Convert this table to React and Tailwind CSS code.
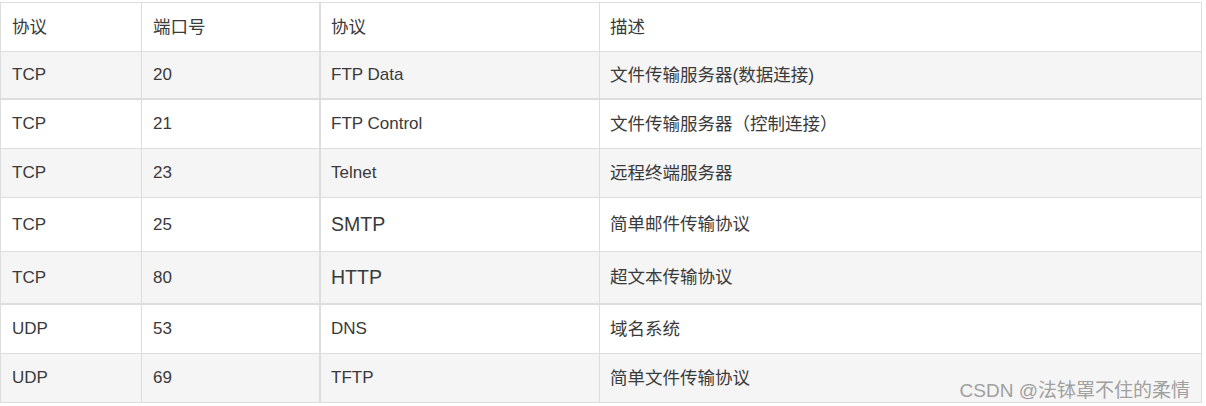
import React from "react";

const rows = [
  { proto: "TCP", port: "20", name: "FTP Data", desc: "文件传输服务器(数据连接)", h: "h-[48px] border-b-2", bg: "bg-[#f5f5f5]" },
  { proto: "TCP", port: "21", name: "FTP Control", desc: "文件传输服务器（控制连接）", h: "h-[49px] border-b", bg: "bg-white" },
  { proto: "TCP", port: "23", name: "Telnet", desc: "远程终端服务器", h: "h-[49px] border-b", bg: "bg-[#f5f5f5]" },
  { proto: "TCP", port: "25", name: "SMTP", desc: "简单邮件传输协议", h: "h-[54px] border-b", bg: "bg-white", big: true },
  { proto: "TCP", port: "80", name: "HTTP", desc: "超文本传输协议", h: "h-[53px] border-b-2", bg: "bg-[#f5f5f5]", big: true },
  { proto: "UDP", port: "53", name: "DNS", desc: "域名系统", h: "h-[49px] border-b", bg: "bg-white" },
  { proto: "UDP", port: "69", name: "TFTP", desc: "简单文件传输协议", h: "h-[48px]", bg: "bg-[#f5f5f5]" },
];

function Row({ row, header }) {
  return (
    <div className={`flex items-stretch border-[#dddddd] ${row.h} ${row.bg}`}>
      <div
        className={`flex w-[141px] items-center border-r border-[#dddddd] pl-[11px] ${
          header ? "text-[17.5px]" : ""
        }`}
      >
        {row.proto}
      </div>
      <div
        className={`flex w-[179px] items-center border-r-2 border-[#dddddd] pl-[11px] ${
          header ? "text-[17.5px]" : ""
        }`}
      >
        {row.port}
      </div>
      <div
        className={`flex w-[279px] items-center border-r border-[#dddddd] pl-[10px] ${
          row.big ? "text-[19.5px]" : header ? "text-[17.5px]" : ""
        }`}
      >
        {row.name}
      </div>
      <div className="flex flex-1 items-center pl-[10px] text-[17.5px]">{row.desc}</div>
    </div>
  );
}

export default function App() {
  return (
    <div
      className="relative h-[406px] w-[1206px] bg-white pt-[2px] text-[17px] text-[#3a3a3a]"
      style={{ fontFamily: '"Liberation Sans", Arial, "Noto Sans CJK SC", sans-serif' }}
    >
      <div className="w-[1202px] border border-[#dddddd]">
        <Row
          header
          row={{ proto: "协议", port: "端口号", name: "协议", desc: "描述", h: "h-[49px] border-b", bg: "bg-white" }}
        />
        {rows.map((r, i) => (
          <Row key={i} row={r} />
        ))}
      </div>
      <div className="absolute right-[16px] bottom-[6px] text-[19px] leading-none text-[#a0a0a0]">
        CSDN @法钵罩不住的柔情
      </div>
    </div>
  );
}
